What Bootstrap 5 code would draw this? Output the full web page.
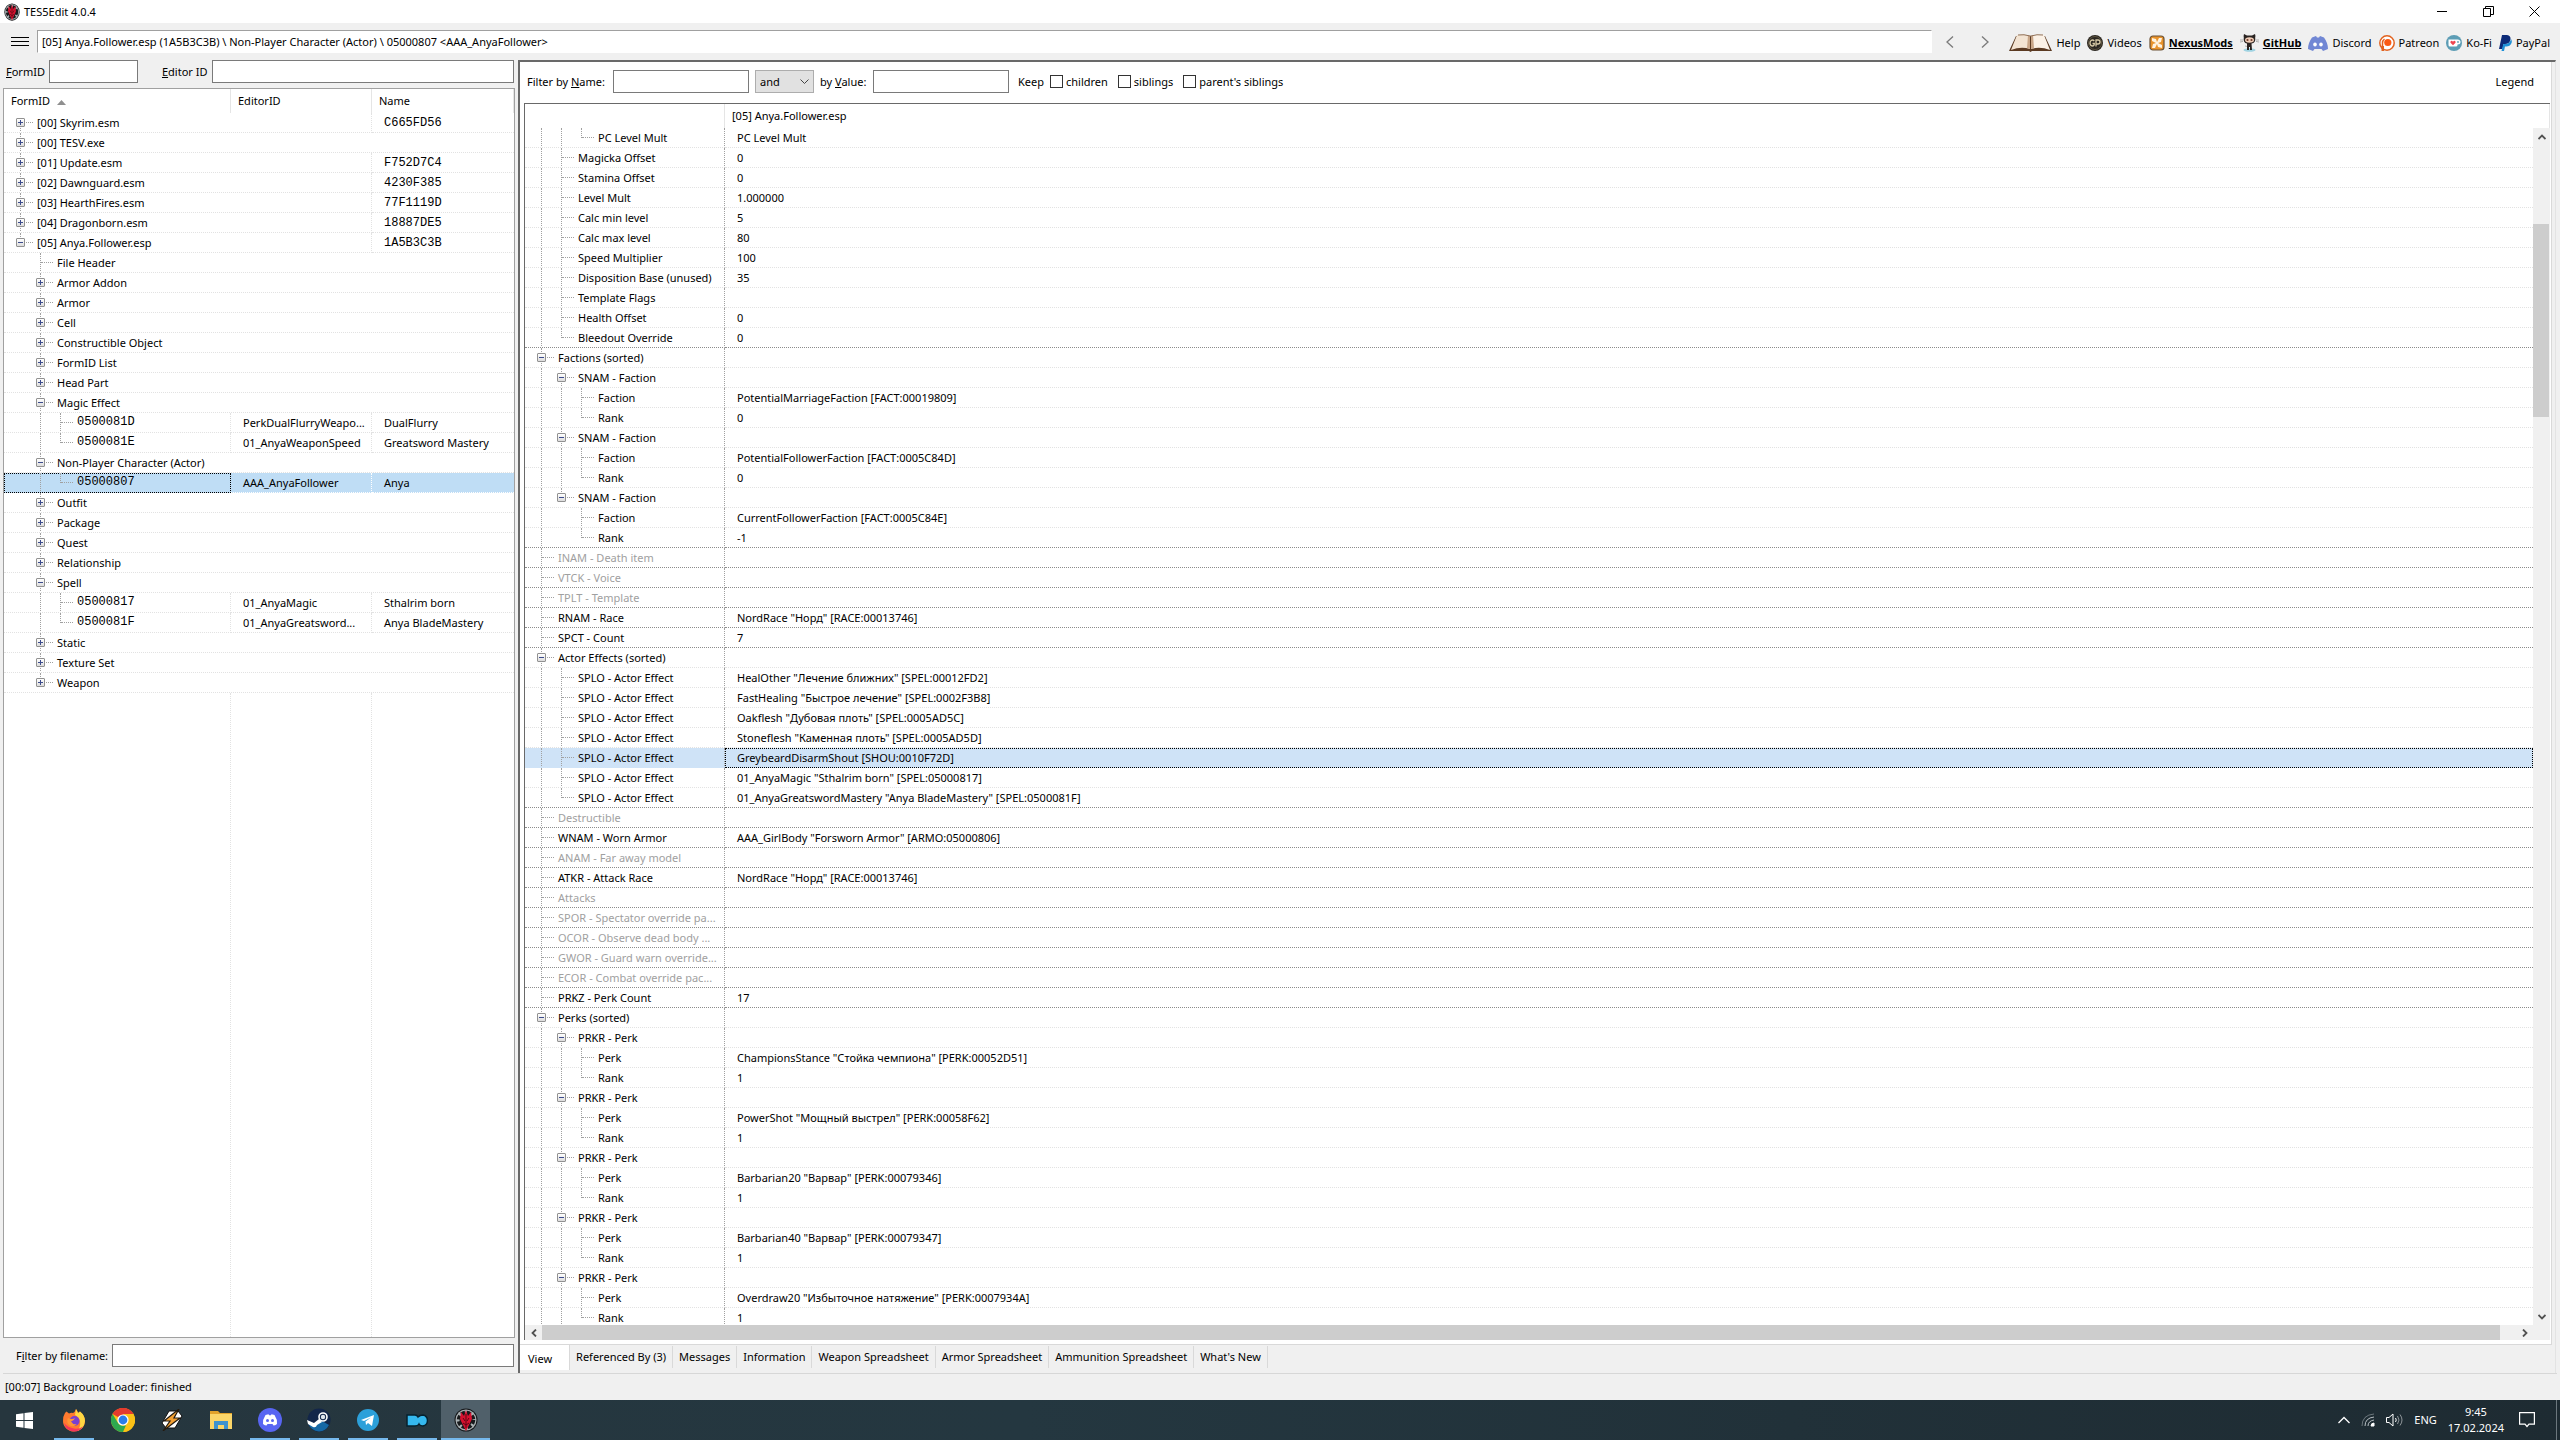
<!DOCTYPE html>
<html lang="en">
<head>
<meta charset="utf-8">
<title>TES5Edit 4.0.4</title>
<meta name="viewport" content="width=device-width, initial-scale=1">
<link href="https://cdn.jsdelivr.net/npm/bootstrap@5.3.0/dist/css/bootstrap.min.css" rel="stylesheet">
<style>
  body { font-family: "Noto Sans", "Open Sans", sans-serif; font-size: 11px; line-height: 16px; color: #000; background: #f0f0f0; }
  button, input, select { font: inherit; color: inherit; border-radius: 0; }
  button { background: none; border: 0; padding: 0; }
  a { color: #000; text-decoration: none; }
  svg { display: block; flex: none; }
  .workarea { min-height: 0; }
  .titlebar { height: 23px; background: #fff; padding-right: 3px; }
  .titlebar .caption-btn { width: 46px; height: 23px; display: flex; align-items: center; justify-content: center; }
  .toolbar { height: 37px; padding: 0 10px 0 11px; }
  .pathbox { height: 23px; border: 1px solid #a0a0a0; border-right-color: #fff; border-bottom-color: #fff; background: #fff; padding: 0 4px; min-width: 0; }
  .nav-arrow { width: 35px; height: 22px; display: flex; align-items: center; justify-content: center; }
  .links { gap: 7px; padding-left: 7px; margin-top: 3px; }
  .links a { display: flex; align-items: center; gap: 4px; }
  .links a.hot { font-weight: 700; text-decoration: underline; }
  .field { height: 23px; border: 1px solid #7a7a7a; background: #fff; padding: 0 4px; }
  .side { width: 518px; padding: 0 3px 0 3px; }
  .idrow { height: 28px; padding: 0 1px 5px 3px; }
  .idrow #fid { width: 89px; }
  .filerow { height: 35px; padding: 0 1px 0 13px; }
  .treebox { border: 1px solid #a0a0a0; background: #fff; }
  table { table-layout: fixed; width: 100%; border-collapse: separate; border-spacing: 0; }
  th { font-weight: 400; padding: 0 7px; height: 24px; border-right: 1px solid #e5e5e5; }
  td { height: 20px; padding: 0; border-bottom: 1px dotted #e2e2e2; overflow: hidden; white-space: nowrap; }
  .cellflex { display: flex; height: 19px; align-items: stretch; padding-left: 7px; }
  .cellflex .txt { padding: 2px 3px 0 6px; line-height: 16px; overflow: hidden; text-overflow: ellipsis; }
  .cellflex .mono { padding-top: 1px; }
  .val { padding: 1px 3px 0 12px; line-height: 16px; overflow: hidden; text-overflow: ellipsis; }
  .mono { font-family: "Liberation Mono", monospace; font-size: 12px; }
  .guide { position: relative; width: 20px; flex: none; }
  .guide.up::before, .guide.down::before, .guide.both::before { content: ""; position: absolute; left: 9px; top: 0; height: 20px; border-left: 1px dotted #a0a0a0; }
  .guide.up::before { height: 10px; }
  .guide.down::before { top: 10px; height: 10px; }
  .guide.stub::after { content: ""; position: absolute; left: 10px; top: 9px; width: 12px; border-top: 1px dotted #a0a0a0; }
  .expander { position: absolute; z-index: 1; left: 5px; top: 5px; width: 9px; height: 9px; border: 1px solid #919191; border-radius: 1px; background: linear-gradient(#fff, #dcdcdc); }
  .expander::before { content: ""; position: absolute; left: 1px; top: 3px; width: 5px; height: 1px; background: #3c4b8c; }
  .expander.plus::after { content: ""; position: absolute; left: 3px; top: 1px; width: 1px; height: 5px; background: #3c4b8c; }
  .files tbody td { border-right: 1px dotted #e2e2e2; }
  .files tbody td:last-child { border-right: 0; }
  .files tr.picked td { background: #bfddf5; border-bottom-color: #fff; border-right-color: #fff; }
  .files tr.picked td:first-child { outline: 1px dotted #000; outline-offset: -1px; }
  .tail { display: grid; grid-template-columns: 227px 141px 1fr; }
  .tail div { border-right: 1px dotted #e2e2e2; }
  .tail div:last-child { border: 0; }
  .panel { border: 1px solid #a0a0a0; border-top: 2px solid #696969; border-left: 2px solid #696969; border-right-color: #e3e3e3; border-bottom: 0; margin-right: 4px; background: #f0f0f0; min-width: 0; }
  .sheet { background: #fff; border-right: 1px solid #d9d9d9; border-bottom: 1px solid #d9d9d9; margin-right: 3px; padding: 0 1px 4px 4px; min-height: 0; }
  .filters { height: 41px; padding: 0 16px 2px 3px; }
  .filters .field { width: 136px; }
  .lab-name { width: 86px; }
  .lab-val { width: 53px; }
  .combo-wrap { position: relative; margin: 0 6px; }
  .combo-wrap svg { position: absolute; right: 5px; top: 9px; pointer-events: none; }
  .combo { height: 23px; width: 59px; border: 1px solid #adadad; background: #e1e1e1; appearance: none; padding: 0 4px; }
  .keep { margin: 0 6px 0 9px; }
  .opt { display: flex; align-items: center; margin-right: 10px; }
  .tick { appearance: none; width: 13px; height: 13px; border: 1px solid #333; background: #fff; margin: 0 3px 0 0; }
  .record { border-top: 1px solid #696969; border-left: 1px solid #696969; min-height: 0; }
  .rows { height: 0; min-height: 100%; }
  .values th { height: 24px; padding: 0 7px; }
  .values td:first-child { border-right: 1px dotted #a0a0a0; }
  .values tr.block td { border-bottom-color: #8c8c8c; }
  .values tr.absent { color: #a0a0a0; }
  .values tr.picked td { background: #cfe3f7; border-bottom-color: #cfe3f7; }
  .values tr.picked td:last-child { outline: 1px dotted #000; outline-offset: -1px; }
  .vbar { width: 17px; background: #f0f0f0; }
  .vbar .thumb { height: 193px; margin: 79px 1px auto 0; background: #cdcdcd; }
  .hbar { height: 15px; background: #f0f0f0; }
  .hbar .thumb { background: #cdcdcd; height: 15px; margin-right: 16px; }
  .arrow { width: 17px; height: 17px; display: flex; align-items: center; justify-content: center; }
  .hbar .arrow { height: 15px; }
  .tabs { height: 28px; align-items: flex-start; }
  .tabs button { height: 22px; padding: 0 6px 1px; border-right: 1px solid #d9d9d9; margin-top: 1px; }
  .tabs button.on { height: 25px; background: #fff; padding: 2px 17px 0 8px; margin-top: 0; }
  .status { height: 27px; margin: 0 3px; padding: 0 2px; border-top: 1px solid #d7d7d7; }
  .taskbar { height: 40px; background: linear-gradient(90deg, #26363e, #243740 40%, #1e2b32); color: #fff; }
  .taskbar .app { width: 49px; height: 40px; display: flex; align-items: center; justify-content: center; }
  .taskbar .run { background: linear-gradient(#76b9ed, #76b9ed) center bottom / 40px 2px no-repeat; }
  .taskbar .front { background: linear-gradient(#76b9ed, #76b9ed) center bottom / 49px 2px no-repeat #50606a; }
  .tray { gap: 11px; padding-right: 3px; }
  .tray .edge { width: 1px; height: 40px; background: #6c777d; margin-left: 10px; }
</style>
</head>
<body class="d-flex flex-column vh-100 overflow-hidden">

<svg class="d-none" aria-hidden="true">
  <symbol id="emblem" viewBox="0 0 24 24">
    <circle cx="12" cy="12" r="11.500" fill="#15171a"/><circle cx="12" cy="12" r="10.500" fill="#a9b0b2"/>
    <circle cx="12" cy="12" r="7.500" fill="none" stroke="#17191b" stroke-width="3.500" stroke-dasharray="4 2"/>
    <circle cx="12" cy="12" r="6.500" fill="#17191b"/>
    <path d="M12 23l-3-6-3-6 1-7 3 4 2-6 2 6 3-4 1 7-3 6z" fill="#d5112f"/>
    <path d="M12 6v14M9 10l2 3M15 10l-2 3M9 15l3 2 3-2" stroke="#5c0512" stroke-width="1" fill="none"/>
  </symbol>
</svg>

<header class="titlebar d-flex align-items-center">
  <svg class="ms-1 me-1" width="16" height="18" viewBox="0 0 24 24" preserveAspectRatio="none"><use href="#emblem"/></svg>
  <span class="flex-grow-1 ps-0">TES5Edit 4.0.4</span>
  <button class="caption-btn" aria-label="Minimize"><svg width="11" height="11" stroke="#000"><path d="M0 5.500h10"/></svg></button>
  <button class="caption-btn" aria-label="Restore"><svg width="11" height="11" fill="none" stroke="#000"><path d="M.5 2.500h7v8h-7zM2.500 2.500v-2h8v8h-3"/></svg></button>
  <button class="caption-btn" aria-label="Close"><svg width="11" height="11" stroke="#000"><path d="M.5.5l10 10M10.500.5l-10 10"/></svg></button>
</header>

<div class="toolbar d-flex align-items-center">
  <button aria-label="Menu" class="me-2"><svg width="18" height="11" stroke="#000"><path d="M0 1.500h18M0 5.500h18M0 9.500h18"/></svg></button>
  <input class="pathbox flex-grow-1" aria-label="Path" readonly value="[05] Anya.Follower.esp (1A5B3C3B) \ Non-Player Character (Actor) \ 05000807 &lt;AAA_AnyaFollower&gt;">
  <button class="nav-arrow" aria-label="Back"><svg width="8" height="12" fill="none" stroke="#7a7a7a" stroke-width="1.300"><path d="M7 .5L1 6l6 5.500"/></svg></button>
  <button class="nav-arrow" aria-label="Forward"><svg width="8" height="12" fill="none" stroke="#7a7a7a" stroke-width="1.300"><path d="M1 .5L7 6l-6 5.500"/></svg></button>
  <nav class="links d-flex align-items-center">
    <a href="#"><svg width="43" height="18" viewBox="0 0 43 18"><path d="M7 2L0 17h20l1.500 1 1.500-1h20L36 2z" fill="#5b3a22"/><path d="M8 1q7-2 13 1v13q-9-3-19 1z" fill="#f3e4d3"/><path d="M35 1q-7-2-13 1v13q9-3 19 1z" fill="#fbf1e6"/><path d="M19 1l-1 13 3 1V2zM24 1l1 13-3 1V2z" fill="#c9a688"/><path d="M9 1Q15 0 21 2l1 0q6-2 12-1" fill="none" stroke="#8f7058"/></svg>Help</a>
    <a href="#"><svg width="16" height="16" viewBox="0 0 16 16"><circle cx="8" cy="8" r="8" fill="#2b2721"/><circle cx="8" cy="8" r="6.500" fill="none" stroke="#6b6048" stroke-width=".8"/><path d="M7.300 6Q6 4.500 4.300 5.300 2.800 6.500 3 8.500q.5 2.500 2.500 2.500 1.800 0 1.800-2.500H5.500M9 11.500V5h2q2 0 2 2t-2 2H9" fill="none" stroke="#d9cba6" stroke-width="1.300"/></svg>Videos</a>
    <a href="#" class="hot"><svg width="16" height="16" viewBox="0 0 16 16"><rect x="1" y="1" width="14" height="14" rx="3" fill="#e8932c" stroke="#6a5034" stroke-width="1.200"/><path d="M3 3l4 1 1 3 2-4 3 0-1 4-3 1 4 2 0 3-4-1-1-3-2 4-3 0 1-4 3-1-4-2z" fill="#fff3df"/></svg>NexusMods</a>
    <a href="#" class="hot"><svg width="19" height="18" viewBox="0 0 19 18"><ellipse cx="9.500" cy="16" rx="6" ry="1.800" fill="#9fd3e2"/><path d="M4 0l3 1.500h5L15 0q.8 2 .2 3.500Q16 9 11.500 9.500L12 16h-2v-3H9v3H7V9.500Q3 9 3.800 3.500 3.300 2 4 0z" fill="#2a2422"/><ellipse cx="9.500" cy="6" rx="4.500" ry="2.700" fill="#f0cdb7"/><circle cx="7.500" cy="6" r="1.100" fill="#6e3a2b"/><circle cx="11.500" cy="6" r="1.100" fill="#6e3a2b"/><path d="M0 6h3M16 6h3M0 8l3-.6M16 7.400l3 .6M5 12l2 .5" stroke="#888" stroke-width=".6"/></svg>GitHub</a>
    <a href="#"><svg width="20" height="15" viewBox="0 0 20 15"><path d="M4 1.500L8 0l1 1.500h2L12 0l4 1.500Q20 7 20 13l-5 2-1.500-2h-7L5 15l-5-2Q0 7 4 1.500z" fill="#7187d4"/><ellipse cx="7" cy="8.500" rx="1.800" ry="2" fill="#fff"/><ellipse cx="13" cy="8.500" rx="1.800" ry="2" fill="#fff"/></svg>Discord</a>
    <a href="#"><svg width="16" height="16" viewBox="0 0 16 16"><circle cx="8" cy="8" r="7.200" fill="#fff" stroke="#e2621f" stroke-width="1.500"/><path d="M3.500 14V8a5 5 0 0 1 2-4" fill="none" stroke="#e2621f" stroke-width="1.500"/><path d="M2.500 11v5h2.500v-5z" fill="#e2621f"/><circle cx="8.800" cy="7.500" r="3.600" fill="#fb5a13"/></svg>Patreon</a>
    <a href="#"><svg width="16" height="16" viewBox="0 0 16 16"><circle cx="8" cy="8" r="8" fill="#5d9db5"/><path d="M2.500 4.500h9q3 0 3 2.500t-3 2.500v.5q0 1.500-1.500 1.500H4q-1.500 0-1.500-1.500z" fill="#fff"/><path d="M7 10.300L4.500 7.800q-.6-1.300.6-1.900 1.100-.3 1.900.8.800-1.100 1.900-.8 1.200.6.600 1.900z" fill="#ef4650"/><circle cx="12" cy="7" r=".9" fill="#5d9db5"/></svg>Ko-Fi</a>
    <a href="#"><svg width="13" height="16" viewBox="0 0 13 16"><path d="M3 0h5q4 .5 3.500 4.500-1 4.500-5.500 4.500H4.500L3.500 14H0z" fill="#0d2b78"/><path d="M12 4q1.500 2 .3 4.500-1.300 3-5 3H6L5 16H2.500L4.300 9H7q4-.3 5-5z" fill="#1f8fd6"/></svg>PayPal</a>
  </nav>
</div>

<main class="workarea d-flex flex-grow-1">
  <aside class="side d-flex flex-column flex-shrink-0">
    <div class="idrow d-flex align-items-center">
      <label for="fid"><u>F</u>ormID</label>
      <input id="fid" class="field ms-1 me-4">
      <label for="eid"><u>E</u>ditor ID</label>
      <input id="eid" class="field ms-1 flex-grow-1">
    </div>
    <div class="treebox d-flex flex-column flex-grow-1 overflow-hidden">
      <table class="files">
        <colgroup><col style="width:227px"><col style="width:141px"><col></colgroup>
        <thead><tr><th>FormID <svg class="d-inline-block ms-1" width="9" height="5" fill="#8f8f8f"><path d="M0 5l4.500-5L9 5z"/></svg></th><th>EditorID</th><th>Name</th></tr></thead>
        <tbody id="files"></tbody>
      </table>
      <div class="tail flex-grow-1"><div></div><div></div><div></div></div>
    </div>
    <div class="filerow d-flex align-items-center">
      <label for="fname">F<u>i</u>lter by filename:</label>
      <input id="fname" class="field ms-1 flex-grow-1">
    </div>
  </aside>

  <section class="panel d-flex flex-column flex-grow-1">
    <div class="sheet d-flex flex-column flex-grow-1">
      <div class="filters d-flex align-items-center">
        <label for="byname" class="lab-name">Filter by <u>N</u>ame:</label>
        <input id="byname" class="field">
        <div class="combo-wrap"><select class="combo" aria-label="Operator"><option>and</option></select><svg width="9" height="6" fill="none" stroke="#444"><path d="M.5.5l4 4 4-4"/></svg></div>
        <label for="byval" class="lab-val">by <u>V</u>alue:</label>
        <input id="byval" class="field">
        <span class="keep">Keep</span>
        <label class="opt"><input type="checkbox" class="tick">children</label>
        <label class="opt"><input type="checkbox" class="tick">siblings</label>
        <label class="opt"><input type="checkbox" class="tick">parent's siblings</label>
        <button class="ms-auto">Legend</button>
      </div>
      <div class="record d-flex flex-column flex-grow-1">
        <table class="values">
          <colgroup><col style="width:200px"><col></colgroup>
          <thead><tr><th></th><th>[05] Anya.Follower.esp</th></tr></thead>
        </table>
        <div class="d-flex flex-grow-1 overflow-hidden">
          <div class="rows flex-grow-1 overflow-hidden">
            <table class="values">
              <colgroup><col style="width:200px"><col></colgroup>
              <tbody id="values"></tbody>
            </table>
          </div>
          <div class="vbar d-flex flex-column">
            <button class="arrow" aria-label="Scroll up"><svg width="8" height="6" fill="none" stroke="#505050" stroke-width="1.800"><path d="M.5 5L4 1.500 7.500 5"/></svg></button>
            <div class="thumb flex-shrink-0 align-self-stretch"></div>
            <button class="arrow" aria-label="Scroll down"><svg width="8" height="6" fill="none" stroke="#505050" stroke-width="1.800"><path d="M.5 1L4 4.500 7.500 1"/></svg></button>
          </div>
        </div>
        <div class="hbar d-flex">
          <button class="arrow" aria-label="Scroll left"><svg width="6" height="8" fill="none" stroke="#505050" stroke-width="1.800"><path d="M5 .5L1.500 4 5 7.500"/></svg></button>
          <div class="thumb flex-grow-1"></div>
          <button class="arrow" aria-label="Scroll right"><svg width="6" height="8" fill="none" stroke="#505050" stroke-width="1.800"><path d="M1 .5L4.500 4 1 7.500"/></svg></button>
          <div class="vbar"></div>
        </div>
      </div>
    </div>
    <div class="tabs d-flex">
      <button class="on">View</button><button>Referenced By (3)</button><button>Messages</button><button>Information</button><button>Weapon Spreadsheet</button><button>Armor Spreadsheet</button><button>Ammunition Spreadsheet</button><button>What's New</button>
    </div>
  </section>
</main>

<footer class="status d-flex align-items-center">[00:07] Background Loader: finished</footer>

<div class="taskbar d-flex align-items-center">
  <button class="app" aria-label="Start"><svg width="17" height="17" fill="#fff"><path d="M0 2.300L7.500 1.200V8H0zM8.500 1L17 0v8H8.500zM0 9h7.500v6.800L0 14.700zM8.500 9H17v8l-8.500-1z"/></svg></button>
  <button class="app run" aria-label="Firefox"><svg width="24" height="24" viewBox="0 0 24 24"><path d="M3 5l1.500-1.500L7 5.500Q9 4.500 11 5q2-1 3-4 1.500 2 2 4l2-1.500Q23 8 23 13a11 10.500 0 0 1-22 0Q1 8 3 5z" fill="#ff7a2f"/><path d="M14 1q1.500 2.500 2 4l2-1.500q5 4 5 9.500-1 8-8 10 4-4 3-10-1-4-5-6z" fill="#ffd743"/><path d="M2 15q2 8 10 8.500 6 0 9-5-4 3-9 2-6-1-10-5.500z" fill="#f4365c"/><circle cx="12.500" cy="13" r="5" fill="#7a3fd0"/><path d="M6 10q4 2 7 0-1 3-4 3.500 2 3.500 6 2.500-4 4-8 1-3-3-1-7z" fill="#ff9534"/></svg></button>
  <button class="app" aria-label="Chrome"><svg width="24" height="24" viewBox="0 0 24 24"><circle cx="12" cy="12" r="12" fill="#fbc116"/><path d="M12 12L1.600 6a12 12 0 0 1 20.800 0z" fill="#e33b2e"/><path d="M12 6h10.400A12 12 0 0 1 12 24l5-9z" fill="#fbc116"/><path d="M12 24A12 12 0 0 1 1.600 6L7 15q2 3 5 3l3-.8z" fill="#2da94f"/><path d="M1.600 6A12 12 0 0 1 22.400 6H12z" fill="#e33b2e"/><circle cx="12" cy="12" r="5.600" fill="#fff"/><circle cx="12" cy="12" r="4.400" fill="#2b7de9"/></svg></button>
  <button class="app" aria-label="Winamp"><svg width="22" height="22" viewBox="0 0 22 22"><path d="M8 2l9 0 4 5-7 12-9 0-4-5z" fill="#fff" stroke="#111"/><path d="M18 0L3 12h6L2 22l17-13h-6z" fill="#f3a033" stroke="#221a10" stroke-width="1.200"/></svg></button>
  <button class="app" aria-label="File Explorer"><svg width="22" height="18" viewBox="0 0 22 18"><path d="M0 0h8l2 2h12v15H0z" fill="#e2a32b"/><path d="M0 3h22v15H0z" fill="#fbd669"/><path d="M4 18v-8h14v8h-4v-4H8v4z" fill="#3f93cf"/></svg></button>
  <button class="app run" aria-label="Discord"><svg width="24" height="24" viewBox="0 0 24 24"><circle cx="12" cy="12" r="12" fill="#5865f2"/><path d="M7.500 7l3-.8.6 1h1.800l.6-1 3 .8q3 4.500 2.500 9-2 1.500-3.500 1.500l-1-1.500h-5l-1 1.500Q7 17.500 5 16q-.5-4.500 2.500-9z" fill="#fff"/><circle cx="9.500" cy="12.500" r="1.500" fill="#5865f2"/><circle cx="14.500" cy="12.500" r="1.500" fill="#5865f2"/></svg></button>
  <button class="app run" aria-label="Steam"><svg width="24" height="24" viewBox="0 0 24 24"><circle cx="12" cy="12" r="11.500" fill="#12264a"/><path d="M1 15l7 3 7-5 7 4q-3 6-10 6.500Q4 23 1 15z" fill="#1668a5"/><circle cx="16" cy="9" r="4" fill="none" stroke="#fff" stroke-width="1.600"/><circle cx="16" cy="9" r="2.200" fill="#dfe6ee"/><path d="M0 12l7 3 5-4 3 3-5 3q-1 3-4 2l-5-3z" fill="#fff"/></svg></button>
  <button class="app run" aria-label="Telegram"><svg width="22" height="22" viewBox="0 0 22 22"><circle cx="11" cy="11" r="11" fill="#2ca0da"/><path d="M4 11l13-5-2 11-4-3-2 2-.5-3.500L14 8.500 7 12z" fill="#fff"/></svg></button>
  <button class="app run" aria-label="Mod Organizer"><svg width="22" height="13" viewBox="0 0 22 13"><path d="M1 1h8q2 0 3 2 2-2 5-2 4.500 1 4.500 5.500T17 12q-3 0-4-2-1 2-4 2H1z" fill="#35b8ee" stroke="#06222f" stroke-width="1.500"/></svg></button>
  <button class="app front" aria-label="TES5Edit"><svg width="24" height="24"><use href="#emblem"/></svg></button>
  <div class="tray d-flex align-items-center ms-auto">
    <button aria-label="Hidden icons"><svg width="12" height="8" fill="none" stroke="#fff" stroke-width="1.300"><path d="M.5 7L6 1.500 11.500 7"/></svg></button>
    <svg width="14" height="14" fill="none" stroke="#b8c0c4"><path d="M1 13Q1 2 13 1" opacity=".5"/><path d="M4 13Q4 5 13 4M7 13q0-5 6-6"/><path d="M10 13q0-3 3-3v3z" fill="#fff" stroke="#fff"/></svg>
    <svg width="17" height="14" fill="none" stroke="#fff"><path d="M.5 4.500H3L7 1v12L3 9.500H.5z"/><path d="M9.500 5q1.500 2 0 4"/><path d="M11.500 3q3 4 0 8M14 1.500q4 5.500 0 11" opacity=".5"/></svg>
    <span>ENG</span>
    <span class="text-center">9:45<br>17.02.2024</span>
    <button class="ms-1" aria-label="Notifications"><svg width="16" height="16" fill="none" stroke="#fff" stroke-width="1.200"><path d="M.6.6h14.800v11.500H10L8 14.500 6 12.100H.6z"/></svg></button>
    <div class="edge"></div>
  </div>
</div>

<script src="https://cdn.jsdelivr.net/npm/bootstrap@5.3.0/dist/js/bootstrap.bundle.min.js"></script>
<script>
  // depth | expander (+, - or blank) | label | editor id | name
  const files = `0|+|[00] Skyrim.esm||C665FD56
0|+|[00] TESV.exe
0|+|[01] Update.esm||F752D7C4
0|+|[02] Dawnguard.esm||4230F385
0|+|[03] HearthFires.esm||77F1119D
0|+|[04] Dragonborn.esm||18887DE5
0|-|[05] Anya.Follower.esp||1A5B3C3B
1||File Header
1|+|Armor Addon
1|+|Armor
1|+|Cell
1|+|Constructible Object
1|+|FormID List
1|+|Head Part
1|-|Magic Effect
2||0500081D|PerkDualFlurryWeapo...|DualFlurry
2||0500081E|01_AnyaWeaponSpeed|Greatsword Mastery
1|-|Non-Player Character (Actor)
2||05000807|AAA_AnyaFollower|Anya
1|+|Outfit
1|+|Package
1|+|Quest
1|+|Relationship
1|-|Spell
2||05000817|01_AnyaMagic|Sthalrim born
2||0500081F|01_AnyaGreatsword...|Anya BladeMastery
1|+|Static
1|+|Texture Set
1|+|Weapon`;

  // depth | expander | label | value; a leading ~ marks an absent element
  const values = `2||PC Level Mult|PC Level Mult
1||Magicka Offset|0
1||Stamina Offset|0
1||Level Mult|1.000000
1||Calc min level|5
1||Calc max level|80
1||Speed Multiplier|100
1||Disposition Base (unused)|35
1||Template Flags|
1||Health Offset|0
1||Bleedout Override|0
0|-|Factions (sorted)|
1|-|SNAM - Faction|
2||Faction|PotentialMarriageFaction [FACT:00019809]
2||Rank|0
1|-|SNAM - Faction|
2||Faction|PotentialFollowerFaction [FACT:0005C84D]
2||Rank|0
1|-|SNAM - Faction|
2||Faction|CurrentFollowerFaction [FACT:0005C84E]
2||Rank|-1
0||~INAM - Death item|
0||~VTCK - Voice|
0||~TPLT - Template|
0||RNAM - Race|NordRace "Норд" [RACE:00013746]
0||SPCT - Count|7
0|-|Actor Effects (sorted)|
1||SPLO - Actor Effect|HealOther "Лечение ближних" [SPEL:00012FD2]
1||SPLO - Actor Effect|FastHealing "Быстрое лечение" [SPEL:0002F3B8]
1||SPLO - Actor Effect|Oakflesh "Дубовая плоть" [SPEL:0005AD5C]
1||SPLO - Actor Effect|Stoneflesh "Каменная плоть" [SPEL:0005AD5D]
1||SPLO - Actor Effect|GreybeardDisarmShout [SHOU:0010F72D]
1||SPLO - Actor Effect|01_AnyaMagic "Sthalrim born" [SPEL:05000817]
1||SPLO - Actor Effect|01_AnyaGreatswordMastery "Anya BladeMastery" [SPEL:0500081F]
0||~Destructible|
0||WNAM - Worn Armor|AAA_GirlBody "Forsworn Armor" [ARMO:05000806]
0||~ANAM - Far away model|
0||ATKR - Attack Race|NordRace "Норд" [RACE:00013746]
0||~Attacks|
0||~SPOR - Spectator override pa...|
0||~OCOR - Observe dead body ...|
0||~GWOR - Guard warn override...|
0||~ECOR - Combat override pac...|
0||PRKZ - Perk Count|17
0|-|Perks (sorted)|
1|-|PRKR - Perk|
2||Perk|ChampionsStance "Стойка чемпиона" [PERK:00052D51]
2||Rank|1
1|-|PRKR - Perk|
2||Perk|PowerShot "Мощный выстрел" [PERK:00058F62]
2||Rank|1
1|-|PRKR - Perk|
2||Perk|Barbarian20 "Варвар" [PERK:00079346]
2||Rank|1
1|-|PRKR - Perk|
2||Perk|Barbarian40 "Варвар" [PERK:00079347]
2||Rank|1
1|-|PRKR - Perk|
2||Perk|Overdraw20 "Избыточное натяжение" [PERK:0007934A]
2||Rank|1`;

  const parse = text => text.split('\n').map(line => line.split('|'));

  // Whether a branch at this depth goes on below row i
  function continues(rows, i, depth, openEnd) {
    for (let k = i + 1; k < rows.length; k++) {
      if (+rows[k][0] < depth) return false;
      if (+rows[k][0] === depth) return true;
    }
    return openEnd && depth < 2;
  }

  function guides(rows, i, openEnd) {
    const level = +rows[i][0];
    let html = '';
    for (let d = 0; d <= level; d++) {
      const more = continues(rows, i, d, openEnd);
      let cls = more ? 'both' : '';
      if (d === level) {
        cls = (more ? (i === 0 ? 'down' : 'both') : 'up') + ' stub';
      }
      const box = d === level && rows[i][1]
        ? `<span class="expander ${rows[i][1] === '+' ? 'plus' : ''}"></span>` : '';
      html += `<span class="guide ${cls}">${box}</span>`;
    }
    return html;
  }

  const fileRows = parse(files);
  document.getElementById('files').innerHTML = fileRows.map(([lvl, , label, id, name], i) => {
    const leaf = lvl === '2';
    const span = leaf ? 1 : name ? 2 : 3;
    return `<tr class="${label === '05000807' ? 'picked' : ''}">
      <td colspan="${span}"><div class="cellflex">${guides(fileRows, i, false)}<span class="txt ${leaf ? 'mono' : ''}">${label}</span></div></td>
      ${leaf ? `<td><div class="val">${id}</div></td>` : ''}
      ${name ? `<td><div class="val ${leaf ? '' : 'mono'}">${name}</div></td>` : ''}</tr>`;
  }).join('');

  const valueRows = parse(values);
  document.getElementById('values').innerHTML = valueRows.map(([, , label, value], i) => {
    const next = valueRows[i + 1];
    const cls = [];
    if (next && next[0] === '0') cls.push('block');
    if (label[0] === '~') cls.push('absent');
    if (value.startsWith('Greybeard')) cls.push('picked');
    return `<tr class="${cls.join(' ')}">
      <td><div class="cellflex">${guides(valueRows, i, true)}<span class="txt">${label.replace('~', '')}</span></div></td>
      <td><div class="val">${value}</div></td></tr>`;
  }).join('');
</script>
</body>
</html>
